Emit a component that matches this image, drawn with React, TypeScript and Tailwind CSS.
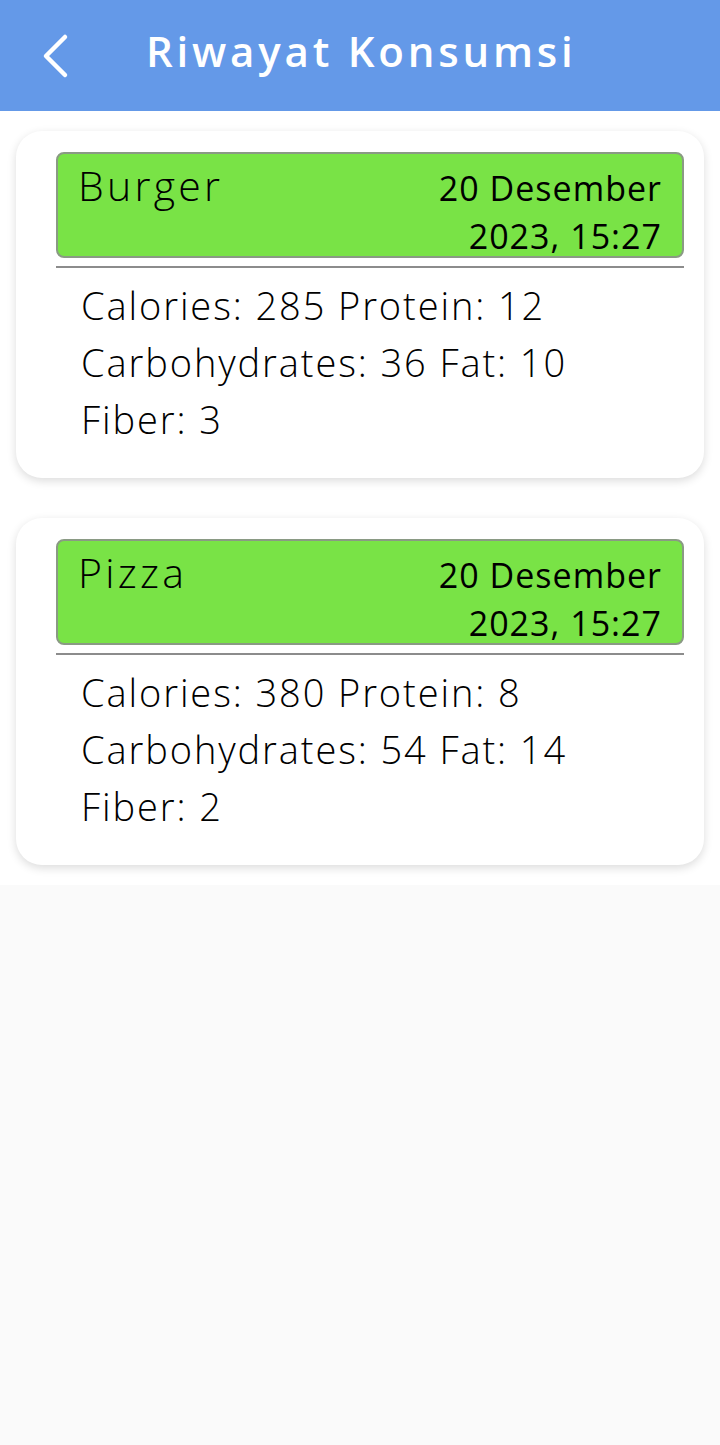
const history = [
  { name: 'Burger', date: '20 Desember', time: '2023, 15:27', calories: 285, protein: 12, carbs: 36, fat: 10, fiber: 3 },
  { name: 'Pizza', date: '20 Desember', time: '2023, 15:27', calories: 380, protein: 8, carbs: 54, fat: 14, fiber: 2 },
];

export default function App() {
  return (
    <div
      className="min-h-[1445px] w-[720px] bg-[#fafafa]"
      style={{ fontFamily: "'Open Sans', 'Noto Sans', sans-serif" }}
    >
      {/* App bar */}
      <header className="flex h-[111px] items-center bg-[#6499e8] shadow-[0_2px_3px_rgba(0,0,0,0.15)]">
        <svg className="ml-[40px] h-[50px] w-[32px]" viewBox="0 0 32 50" fill="none">
          <polyline
            points="25,6 6,25 25,44"
            stroke="white"
            strokeWidth="4.5"
            strokeLinecap="round"
            strokeLinejoin="round"
          />
        </svg>
        <h1 className="mb-[10px] ml-[74px] text-[42px] font-semibold tracking-[0.09em] text-white">
          Riwayat Konsumsi
        </h1>
      </header>

      {/* History list */}
      <div className="flex flex-col gap-10 bg-white px-4 py-5">
        {history.map((item) => (
          <div
            key={item.name}
            className="rounded-[26px] bg-white pt-[21px] pr-5 pb-[30px] pl-10 shadow-[0_3px_10px_rgba(0,0,0,0.14)]"
          >
            <div className="flex h-[106px] justify-between rounded-lg border-2 border-[#8a9a84] bg-[#79e346] pr-5 pl-5 text-black">
              <span className="mt-[1px] text-[41px] font-light leading-[60px] tracking-[0.08em]">{item.name}</span>
              <div className="mt-[10px] text-right text-[34px] leading-[48px] tracking-[0.03em]">
                <div>{item.date}</div>
                <div>{item.time}</div>
              </div>
            </div>
            <div className="mt-[8px] h-[2px] bg-[#8c8c8c]" />
            <div className="mt-[9px] pl-[25px] text-[38px] font-light leading-[57px] tracking-[0.05em] text-black">
              <div>Calories: {item.calories} Protein: {item.protein}</div>
              <div>Carbohydrates: {item.carbs} Fat: {item.fat}</div>
              <div>Fiber: {item.fiber}</div>
            </div>
          </div>
        ))}
      </div>
    </div>
  );
}
